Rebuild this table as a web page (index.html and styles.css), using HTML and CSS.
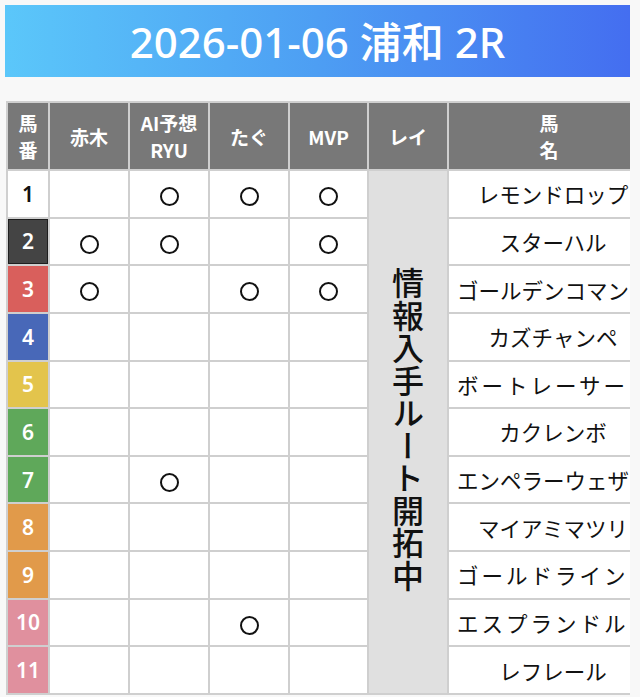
FILE: index.html
```html
<!DOCTYPE html>
<html lang="ja">
<head>
<meta charset="utf-8">
<title>2026-01-06 浦和 2R</title>
<link rel="stylesheet" href="styles.css">
</head>
<body>
<div class="page">
  <header class="banner"><h1>2026-01-06 浦和 2R</h1></header>
  <div class="table-wrap">
    <table class="race">
      <thead>
        <tr>
          <th class="c-no">馬<br>番</th>
          <th class="c-pick">赤木</th>
          <th class="c-pick">AI予想<br>RYU</th>
          <th class="c-pick">たぐ</th>
          <th class="c-pick c-narrow">MVP</th>
          <th class="c-pick">レイ</th>
          <th class="c-name">馬<br>名</th>
        </tr>
      </thead>
      <tbody>
        <tr>
          <td class="no n1">1</td>
          <td></td>
          <td><span class="mark"></span></td>
          <td><span class="mark"></span></td>
          <td><span class="mark"></span></td>
          <td class="rei" rowspan="11"><span class="rei-text">情報入手ルート開拓中</span></td>
          <td class="name">レモンドロップ</td>
        </tr>
        <tr>
          <td class="no n2">2</td>
          <td><span class="mark"></span></td>
          <td><span class="mark"></span></td>
          <td></td>
          <td><span class="mark"></span></td>
          <td class="name">スターハル</td>
        </tr>
        <tr>
          <td class="no n3">3</td>
          <td><span class="mark"></span></td>
          <td></td>
          <td><span class="mark"></span></td>
          <td><span class="mark"></span></td>
          <td class="name wide">ゴールデンコマン</td>
        </tr>
        <tr>
          <td class="no n4">4</td>
          <td></td><td></td><td></td><td></td>
          <td class="name">カズチャンペ</td>
        </tr>
        <tr>
          <td class="no n5">5</td>
          <td></td><td></td><td></td><td></td>
          <td class="name wide loose">ボートレーサー</td>
        </tr>
        <tr>
          <td class="no n6">6</td>
          <td></td><td></td><td></td><td></td>
          <td class="name">カクレンボ</td>
        </tr>
        <tr>
          <td class="no n7">7</td>
          <td></td>
          <td><span class="mark"></span></td>
          <td></td><td></td>
          <td class="name wide">エンペラーウェザ</td>
        </tr>
        <tr>
          <td class="no n8">8</td>
          <td></td><td></td><td></td><td></td>
          <td class="name">マイアミマツリ</td>
        </tr>
        <tr>
          <td class="no n9">9</td>
          <td></td><td></td><td></td><td></td>
          <td class="name wide loose">ゴールドライン</td>
        </tr>
        <tr>
          <td class="no n10">10</td>
          <td></td><td></td>
          <td><span class="mark"></span></td>
          <td></td>
          <td class="name wide loose">エスプランドル</td>
        </tr>
        <tr>
          <td class="no n11">11</td>
          <td></td><td></td><td></td><td></td>
          <td class="name">レフレール</td>
        </tr>
      </tbody>
    </table>
  </div>
</div>
</body>
</html>
```
FILE: styles.css
```css
* { box-sizing: border-box; }

html, body {
  margin: 0;
  padding: 0;
  background: #f8f8f8;
}

body {
  font-family: "Noto Sans", "Noto Sans CJK JP", sans-serif;
  color: #111;
}

.page {
  padding: 5px 10px 0 5px;
}

.banner {
  width: 625px;
  height: 72px;
  background: linear-gradient(90deg, #5bc7fa 0%, #4d9ef3 50%, #446ef0 100%);
  display: flex;
  align-items: center;
  justify-content: center;
}

.banner h1 {
  margin: 0;
  font-family: "Noto Sans", "Noto Sans CJK JP", sans-serif;
  font-size: 42px;
  font-weight: 500;
  color: #fff;
  line-height: 1;
  padding-top: 2px;
}

.table-wrap {
  margin: 24px 0 0 1px;
  width: 624px;
  overflow: hidden;
}

.race {
  border-collapse: separate;
  border-spacing: 0;
  table-layout: fixed;
  width: 645px;
  border-left: 2px solid #cfcfcf;
  border-top: 2px solid #cfcfcf;
  font-family: "Noto Sans CJK JP", sans-serif;
}

.race th,
.race td {
  border-right: 2px solid #cfcfcf;
  border-bottom: 2px solid #cfcfcf;
  padding: 0;
  text-align: center;
  vertical-align: middle;
}

.race thead tr { height: 68px; }
.race tbody tr { height: 47.64px; }

.race th {
  background: #787878;
  color: #fff;
  font-size: 19px;
  font-weight: 700;
  line-height: 27px;
}

.c-no { width: 42px; }
.c-pick { width: 80px; }
.c-narrow { width: 79px; }
.c-name { width: 202px; padding-left: 8px; padding-right: 0; }

.race td { background: #fff; }

.no {
  font-family: "Noto Sans", sans-serif;
  font-size: 21px;
  font-weight: 600;
  color: #fff;
}
.race td.n1 { background: #fff; color: #111; }
.race td.n2 { background: #444; box-shadow: inset 0 0 0 1px #1e1e1e; }
.race td.n3 { background: #d95f5c; }
.race td.n4 { background: #4868b8; }
.race td.n5 { background: #e3c44c; }
.race td.n6,
.race td.n7 { background: #5fa85a; }
.race td.n8,
.race td.n9 { background: #e19a4a; }
.race td.n10,
.race td.n11 { background: #e0909e; }

.mark {
  display: inline-block;
  width: 19px;
  height: 19px;
  border: 2px solid #111;
  border-radius: 50%;
  vertical-align: middle;
}

.race td.rei {
  background: #e0e0e0;
}

.rei-text {
  display: inline-block;
  writing-mode: vertical-rl;
  font-size: 32px;
  font-weight: 500;
  line-height: 1;
  letter-spacing: 0.5px;
  color: #111;
}

.race td.name {
  padding-left: 8px;
  padding-right: 0;
  font-size: 21.5px;
  font-weight: 400;
  white-space: nowrap;
  overflow: hidden;
  color: #111;
}

.race td.name.wide {
  text-align: left;
}

.race td.name.loose {
  letter-spacing: 3px;
}
```
